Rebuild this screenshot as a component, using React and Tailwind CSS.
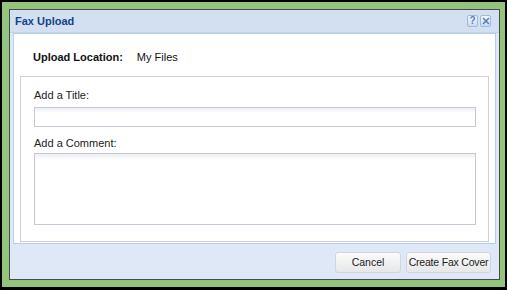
import React, { useState } from 'react';

const font = { fontFamily: '"Liberation Sans", Arial, sans-serif' };

const ToolButton = ({ children }) => (
  <button
    type="button"
    className="flex h-[12px] w-[11px] items-center justify-center rounded-[2px] border border-[#9fb8db] bg-gradient-to-b from-[#f4f8fd] to-[#c9dbf2] text-[10px] font-bold leading-none text-[#5b7fb6]"
  >
    {children}
  </button>
);

const FaxUpload = () => {
  const [title, setTitle] = useState('');
  const [comment, setComment] = useState('');

  return (
    <div className="flex h-full flex-col border border-[#4a4a4a] bg-[#dfe8f6]">
      {/* header */}
      <div className="flex h-[23px] items-center justify-between border-b border-[#c3d4ec] bg-[#d3e0f1] pl-[5px] pr-[8px]">
        <span className="mt-[1px] text-[11px] font-bold text-[#15428b]">Fax Upload</span>
        <div className="flex gap-[2px]">
          <ToolButton>?</ToolButton>
          <ToolButton>
            <svg viewBox="0 0 8 8" className="h-[8px] w-[8px]">
              <path d="M1 1L7 7M7 1L1 7" stroke="#5b7fb6" strokeWidth="1.6" />
            </svg>
          </ToolButton>
        </div>
      </div>

      {/* body */}
      <div className="mx-[3px] flex h-[211px] flex-col border border-[#b7cdec] bg-white px-[6px] pb-[1px]">
        <div className="flex h-[42px] items-center gap-[14px] pl-[13px] pt-[4px] text-[11px] text-[#111]">
          <span className="font-bold">Upload Location:</span>
          <span>My Files</span>
        </div>
        <div className="flex flex-1 flex-col border border-[#cfd0dc] pl-[13px] pr-[12px] pt-[11px]">
          <label className="h-[19px] text-[11px] leading-[14px] text-[#222]">Add a Title:</label>
          <input
            value={title}
            onChange={(e) => setTitle(e.target.value)}
            className="h-[20px] w-full border border-[#c6c8d4] bg-[linear-gradient(#eceef2,#ffffff_5px)] text-[11px] outline-none"
          />
          <label className="mt-[9px] h-[17px] text-[11px] leading-[14px] text-[#222]">Add a Comment:</label>
          <textarea
            value={comment}
            onChange={(e) => setComment(e.target.value)}
            className="h-[72px] w-full resize-none border border-[#c6c8d4] bg-[linear-gradient(#eceef2,#ffffff_6px)] text-[11px] outline-none"
          />
        </div>
      </div>

      {/* footer */}
      <div className="flex flex-1 items-start justify-end gap-[5px] pr-[8px] pt-[8px]">
        <button
          type="button"
          className="h-[21px] w-[66px] rounded-[3px] border border-[#d2d6dc] bg-gradient-to-b from-[#fbfbfb] to-[#e6e7e9] text-[10.5px] text-[#222]"
        >
          Cancel
        </button>
        <button
          type="button"
          className="h-[21px] w-[85px] rounded-[3px] border border-[#d2d6dc] bg-gradient-to-b from-[#fbfbfb] to-[#e6e7e9] text-[10.5px] tracking-[-0.2px] text-[#222]"
        >
          Create Fax Cover
        </button>
      </div>
    </div>
  );
};

export default function App() {
  return (
    <div style={font} className="h-[290px] w-[507px] bg-black pb-[3px] pl-[2px] pr-[2px] pt-[2px]">
      <div className="h-full bg-[#93c47d] pb-[7px] pl-[7px] pr-[5px] pt-[7px]">
        <FaxUpload />
      </div>
    </div>
  );
}
